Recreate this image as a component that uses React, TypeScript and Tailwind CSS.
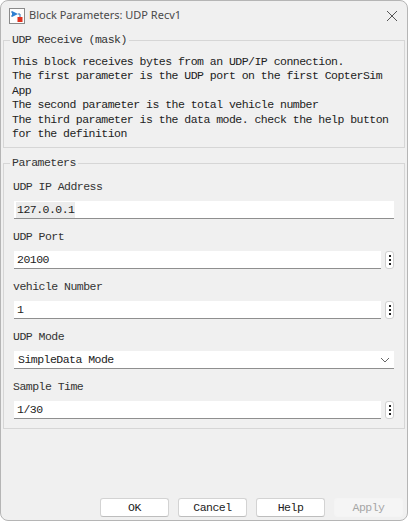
import type { ReactNode } from "react"

const mono = "font-['Liberation_Mono','DejaVu_Sans_Mono',monospace] text-[11.5px] tracking-[-0.52px]"

function BlockIcon() {
  return (
    <svg width="16" height="16" viewBox="0 0 16 16">
      <rect x="0.5" y="0.5" width="15" height="15" fill="#fdfdfd" stroke="#8a8a8a" />
      <path d="M3 3 L3 9 L9 6 Z" fill="#2f7fd0" />
      <path d="M2 4 L3 4 M2 8 L3 8 M9 6 L11 6 L11 9" stroke="#2f6fb0" strokeWidth="1" fill="none" />
      <rect x="8.5" y="9" width="5" height="5" fill="#e0301e" />
    </svg>
  )
}

function DotsButton() {
  return (
    <div className="ml-[4px] flex h-[18px] w-[9px] shrink-0 flex-col items-center justify-center gap-[2px] rounded-[3px] border border-[#cfcfcf] bg-white">
      <span className="h-[2px] w-[2px] bg-[#222]" />
      <span className="h-[2px] w-[2px] bg-[#222]" />
      <span className="h-[2px] w-[2px] bg-[#222]" />
    </div>
  )
}

function TextBox({ value, highlight }: { value: string; highlight?: boolean }) {
  return (
    <div className="flex h-[18px] flex-1 items-center border-b border-[#8f8f8f] bg-white pl-[2px]">
      <span className={`px-[1px] leading-[16px] text-[#222] ${highlight ? "bg-[#ececec]" : ""}`}>
        {value}
      </span>
    </div>
  )
}

function Field({ label, children }: { label: string; children: ReactNode }) {
  return (
    <div className="flex flex-col">
      <div className="h-[14px] leading-[14px] text-[#333]">{label}</div>
      <div className="mt-[7px] flex items-center pl-[1px]">{children}</div>
    </div>
  )
}

function Button({ label, disabled }: { label: string; disabled?: boolean }) {
  return (
    <button
      className={`h-[19px] w-[69px] rounded-[3px] ${mono} ${
        disabled
          ? "border border-[#f4f4f4] bg-[#f5f5f5] text-[#a6a6a6]"
          : "border border-[#d3d3d3] border-b-[#bdbdbd] bg-white text-[#222]"
      }`}
    >
      {label}
    </button>
  )
}

export default function App() {
  return (
    <div className="h-[521px] w-[408px] bg-white">
      <div className="flex h-full flex-col rounded-[8px] border border-[#b5b5b5] bg-[#f0f0f0]">
        <div className="flex h-[29px] shrink-0 items-center pl-[8px] pr-[8px]">
          <BlockIcon />
          <span className="ml-[4px] font-['Noto_Sans',sans-serif] text-[11px] text-[#4a4a4a]">
            Block Parameters: UDP Recv1
          </span>
          <svg className="ml-auto mr-[1px]" width="12" height="12" viewBox="0 0 12 12">
            <path d="M1 1 L11 11 M11 1 L1 11" stroke="#555" strokeWidth="1" />
          </svg>
        </div>

        <div className={`flex flex-1 flex-col px-[2px] ${mono}`}>
          <fieldset className="mt-[3px] border border-[#d6d6d6] pb-[6px] pl-[8px] pr-[6px]">
            <legend className="ml-[-2px] px-[2px] leading-[14px] text-[#333]">UDP Receive (mask)</legend>
            <div className="pt-[8px] leading-[14.4px] text-[#222]">
              <div>This block receives bytes from an UDP/IP connection.</div>
              <div>The first parameter is the UDP port on the first CopterSim</div>
              <div>App</div>
              <div>The second parameter is the total vehicle number</div>
              <div>The third parameter is the data mode. check the help button</div>
              <div>for the definition</div>
            </div>
          </fieldset>

          <fieldset className="mt-[8px] border border-[#d6d6d6] pb-[9px] pl-[9px] pr-[10px]">
            <legend className="ml-[-3px] px-[2px] leading-[14px] text-[#333]">Parameters</legend>
            <div className="flex flex-col gap-[11px] pt-[10px]">
              <Field label="UDP IP Address">
                <TextBox value="127.0.0.1" highlight />
              </Field>
              <Field label="UDP Port">
                <TextBox value="20100" />
                <DotsButton />
              </Field>
              <Field label="vehicle Number">
                <TextBox value="1" />
                <DotsButton />
              </Field>
              <Field label="UDP Mode">
                <div className="flex h-[18px] flex-1 items-center justify-between border-b border-[#8f8f8f] bg-white pl-[4px] pr-[4px]">
                  <span className="text-[#222]">SimpleData Mode</span>
                  <svg width="10" height="6" viewBox="0 0 10 6">
                    <path d="M1 1 L5 5 L9 1" stroke="#666" strokeWidth="1" fill="none" />
                  </svg>
                </div>
              </Field>
              <Field label="Sample Time">
                <TextBox value="1/30" />
                <DotsButton />
              </Field>
            </div>
          </fieldset>

          <div className="mt-auto mb-[3px] flex justify-end gap-[9px] pr-[2px]">
            <Button label="OK" />
            <Button label="Cancel" />
            <Button label="Help" />
            <Button label="Apply" disabled />
          </div>
        </div>
      </div>
    </div>
  )
}
